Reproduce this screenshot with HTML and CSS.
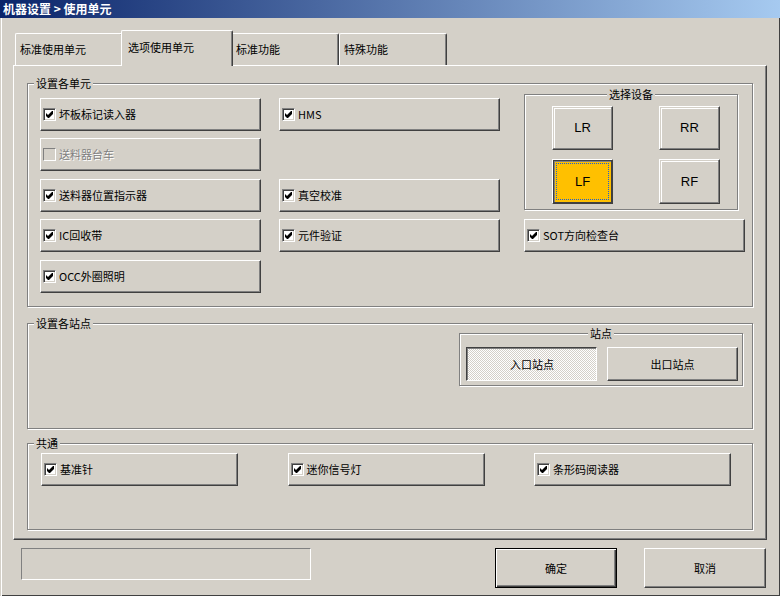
FILE: index.html
```html
<!DOCTYPE html>
<html lang="zh-CN">
<head>
<meta charset="utf-8">
<title>机器设置 &gt; 使用单元</title>
<link rel="stylesheet" href="styles.css">
</head>
<body>
<div class="window">
  <div class="titlebar">机器设置 &gt; 使用单元</div>
  <div class="tabs">
    <div class="tab">标准使用单元</div>
    <div class="tab active">选项使用单元</div>
    <div class="tab">标准功能</div>
    <div class="tab">特殊功能</div>
  </div>
  <div class="panel">
    <div class="group g1">
      <div class="glabel">设置各单元</div>
      <div class="unit-grid">
        <div class="cbtn c1 r1"><span class="cb"><svg viewBox="0 0 7 7" width="7" height="7"><path d="M0 2L2 4L6 0L7 0L7 3L3 7L2 7L0 5Z"/></svg></span>坏板标记读入器</div>
        <div class="cbtn c3 r1"><span class="cb"><svg viewBox="0 0 7 7" width="7" height="7"><path d="M0 2L2 4L6 0L7 0L7 3L3 7L2 7L0 5Z"/></svg></span>HMS</div>
        <div class="cbtn c1 r2 disabled"><span class="cb"></span>送料器台车</div>
        <div class="cbtn c1 r3"><span class="cb"><svg viewBox="0 0 7 7" width="7" height="7"><path d="M0 2L2 4L6 0L7 0L7 3L3 7L2 7L0 5Z"/></svg></span>送料器位置指示器</div>
        <div class="cbtn c3 r3"><span class="cb"><svg viewBox="0 0 7 7" width="7" height="7"><path d="M0 2L2 4L6 0L7 0L7 3L3 7L2 7L0 5Z"/></svg></span>真空校准</div>
        <div class="cbtn c1 r4"><span class="cb"><svg viewBox="0 0 7 7" width="7" height="7"><path d="M0 2L2 4L6 0L7 0L7 3L3 7L2 7L0 5Z"/></svg></span>IC回收带</div>
        <div class="cbtn c3 r4"><span class="cb"><svg viewBox="0 0 7 7" width="7" height="7"><path d="M0 2L2 4L6 0L7 0L7 3L3 7L2 7L0 5Z"/></svg></span>元件验证</div>
        <div class="cbtn c1 r5"><span class="cb"><svg viewBox="0 0 7 7" width="7" height="7"><path d="M0 2L2 4L6 0L7 0L7 3L3 7L2 7L0 5Z"/></svg></span>OCC外圈照明</div>
        <div class="group devices">
          <div class="glabel center">选择设备</div>
          <div class="dev-grid">
            <div class="dev">LR</div>
            <div class="dev">RR</div>
            <div class="dev selected">LF</div>
            <div class="dev">RF</div>
          </div>
        </div>
        <div class="cbtn c5 r4"><span class="cb"><svg viewBox="0 0 7 7" width="7" height="7"><path d="M0 2L2 4L6 0L7 0L7 3L3 7L2 7L0 5Z"/></svg></span>SOT方向检查台</div>
      </div>
    </div>
    <div class="group g2">
      <div class="glabel">设置各站点</div>
      <div class="group station">
        <div class="glabel center">站点</div>
        <div class="st-row">
          <div class="stbtn pressed">入口站点</div>
          <div class="stbtn">出口站点</div>
        </div>
      </div>
    </div>
    <div class="group g3">
      <div class="glabel">共通</div>
      <div class="common-row">
        <div class="cbtn"><span class="cb"><svg viewBox="0 0 7 7" width="7" height="7"><path d="M0 2L2 4L6 0L7 0L7 3L3 7L2 7L0 5Z"/></svg></span>基准针</div>
        <div class="cbtn"><span class="cb"><svg viewBox="0 0 7 7" width="7" height="7"><path d="M0 2L2 4L6 0L7 0L7 3L3 7L2 7L0 5Z"/></svg></span>迷你信号灯</div>
        <div class="cbtn"><span class="cb"><svg viewBox="0 0 7 7" width="7" height="7"><path d="M0 2L2 4L6 0L7 0L7 3L3 7L2 7L0 5Z"/></svg></span>条形码阅读器</div>
      </div>
    </div>
  </div>
  <div class="footer">
    <div class="status"></div>
    <div class="dbtn default">确定</div>
    <div class="dbtn cancel">取消</div>
  </div>
</div>
</body>
</html>
```
FILE: styles.css
```css
* { box-sizing: border-box; }

body {
  margin: 0;
  width: 780px;
  height: 596px;
  overflow: hidden;
  background: #d4d0c8;
  font-family: "Noto Sans CJK SC", "Liberation Sans", sans-serif;
  font-size: 11px;
  line-height: 13px;
  color: #000;
}

.window {
  width: 780px;
  height: 596px;
  box-shadow: inset 1px 0 0 #d4d0c8, inset 2px 0 0 #fff, inset -1px -1px 0 #404040;
}

.titlebar {
  height: 18px;
  background: linear-gradient(to right, #0a246a, #a6caf0);
  color: #fff;
  font-weight: bold;
  font-size: 12px;
  line-height: 18px;
  padding-left: 3px;
}

/* tabs */
.tabs {
  display: flex;
  align-items: flex-end;
  height: 35px;
  margin: 12px 0 0 15px;
  position: relative;
  z-index: 1;
}

.tab {
  width: 108px;
  height: 32px;
  border: 1px solid #fff;
  border-bottom: none;
  border-right-color: #404040;
  border-radius: 2px 2px 0 0;
  box-shadow: inset -1px 0 0 #808080;
  background: #d4d0c8;
  padding-left: 4px;
  display: flex;
  align-items: center;
}

.tab.active {
  width: 112px;
  height: 36px;
  margin: 0 -2px -1px;
  padding-left: 6px;
  padding-bottom: 2px;
  position: relative;
  z-index: 2;
}

/* panel */
.panel {
  margin-left: 13px;
  width: 754px;
  height: 475px;
  border: 1px solid;
  border-color: #fff #404040 #404040 #fff;
  box-shadow: inset -1px -1px 0 #808080;
  padding: 17px 0 0 13px;
}

.group {
  border: 1px solid #808080;
  box-shadow: 1px 1px 0 #fff, inset 1px 1px 0 #fff;
}

.glabel {
  display: block;
  width: fit-content;
  height: 13px;
  line-height: 13px;
  margin: -7px 0 0 6px;
  padding: 0 2px;
  background: #d4d0c8;
}

.glabel.center {
  margin-left: auto;
  margin-right: auto;
}

.g1 { width: 726px; height: 224px; }

.unit-grid {
  display: grid;
  grid-template-columns: 221px 18px 221px 24px 221px;
  grid-template-rows: 33px 34px 33px 34px 33px;
  row-gap: 7px;
  margin: 8px 0 0 12px;
}

.c1 { grid-column: 1; }
.c3 { grid-column: 3; }
.c5 { grid-column: 5; }
.r1 { grid-row: 1; }
.r2 { grid-row: 2; }
.r3 { grid-row: 3; }
.r4 { grid-row: 4; }
.r5 { grid-row: 5; }

.cbtn {
  height: 33px;
  border: 1px solid;
  border-color: #fff #404040 #404040 #fff;
  box-shadow: inset -1px -1px 0 #808080;
  display: flex;
  align-items: center;
  padding-left: 2px;
  white-space: nowrap;
}

.cb {
  width: 13px;
  height: 13px;
  flex: none;
  margin-right: 3px;
  border: 1px solid;
  border-color: #808080 #fff #fff #808080;
  box-shadow: inset 1px 1px 0 #404040, inset -1px -1px 0 #d4d0c8;
  background: #fff;
  display: flex;
  align-items: center;
  justify-content: center;
}

.cb svg { display: block; fill: #000; }

.cbtn.disabled {
  color: #808080;
  text-shadow: 1px 1px 0 #fff;
}

.cbtn.disabled .cb {
  background: #d4d0c8;
  box-shadow: none;
  border-color: #808080 #fff #fff #808080;
}

/* device selector */
.devices {
  grid-column: 5;
  grid-row: 1 / 4;
  align-self: start;
  width: 214px;
  height: 116px;
  margin-top: -4px;
}

.dev-grid {
  display: grid;
  grid-template-columns: 61px 61px;
  grid-template-rows: 44px 45px;
  column-gap: 46px;
  row-gap: 9px;
  margin: 5px 0 0 27px;
}

.dev {
  border: 1px solid;
  border-color: #fff #404040 #404040 #fff;
  box-shadow: inset -1px -1px 0 #808080, inset 1px 1px 0 #d4d0c8, inset 2px 2px 0 #fff;
  font-family: "Liberation Sans", Arial, sans-serif;
  font-size: 13px;
  display: flex;
  align-items: center;
  justify-content: center;
  padding-bottom: 1px;
}

.dev.selected {
  position: relative;
  background: #ffc000;
  box-shadow: inset 1px 1px 0 #404040, inset -1px -1px 0 #404040, inset 2px 2px 0 #808080;
}

.dev.selected::after {
  content: "";
  position: absolute;
  inset: 3px;
  border: 1px dotted #1f5fd0;
}

/* stations */
.g2 { width: 726px; height: 106px; margin-top: 16px; }

.station {
  width: 284px;
  height: 53px;
  margin: 3px 9px 0 auto;
}

.st-row {
  display: flex;
  gap: 10px;
  margin: 7px 0 0 6px;
}

.stbtn {
  width: 131px;
  height: 34px;
  border: 1px solid;
  border-color: #fff #404040 #404040 #fff;
  box-shadow: inset -1px -1px 0 #808080;
  display: flex;
  align-items: center;
  justify-content: center;
}

.stbtn.pressed {
  border-color: #404040 #fff #fff #404040;
  box-shadow: inset 1px 1px 0 #808080;
  background-color: #fff;
  background-image: conic-gradient(#d4d0c8 0 25%, #fff 0 50%, #d4d0c8 0 75%, #fff 0);
  background-size: 2px 2px;
  padding: 1px 0 0 1px;
}

/* common */
.g3 { width: 726px; height: 87px; margin-top: 14px; }

.common-row {
  display: grid;
  grid-template-columns: 197px 197px 197px;
  column-gap: 49.5px;
  margin: 3px 0 0 13px;
}

/* footer */
.footer {
  display: flex;
  margin-top: 8px;
  padding-left: 21px;
}

.status {
  width: 290px;
  height: 32px;
  border: 1px solid;
  border-color: #808080 #fff #fff #808080;
}

.dbtn {
  width: 122px;
  height: 40px;
  display: flex;
  align-items: center;
  justify-content: center;
}

.dbtn.default {
  margin-left: 184px;
  border: 1px solid #000;
  box-shadow: inset 1px 1px 0 #fff, inset -1px -1px 0 #404040, inset -2px -2px 0 #808080;
}

.dbtn.cancel {
  margin-left: 27px;
  border: 1px solid;
  border-color: #fff #404040 #404040 #fff;
  box-shadow: inset -1px -1px 0 #808080;
}
```
